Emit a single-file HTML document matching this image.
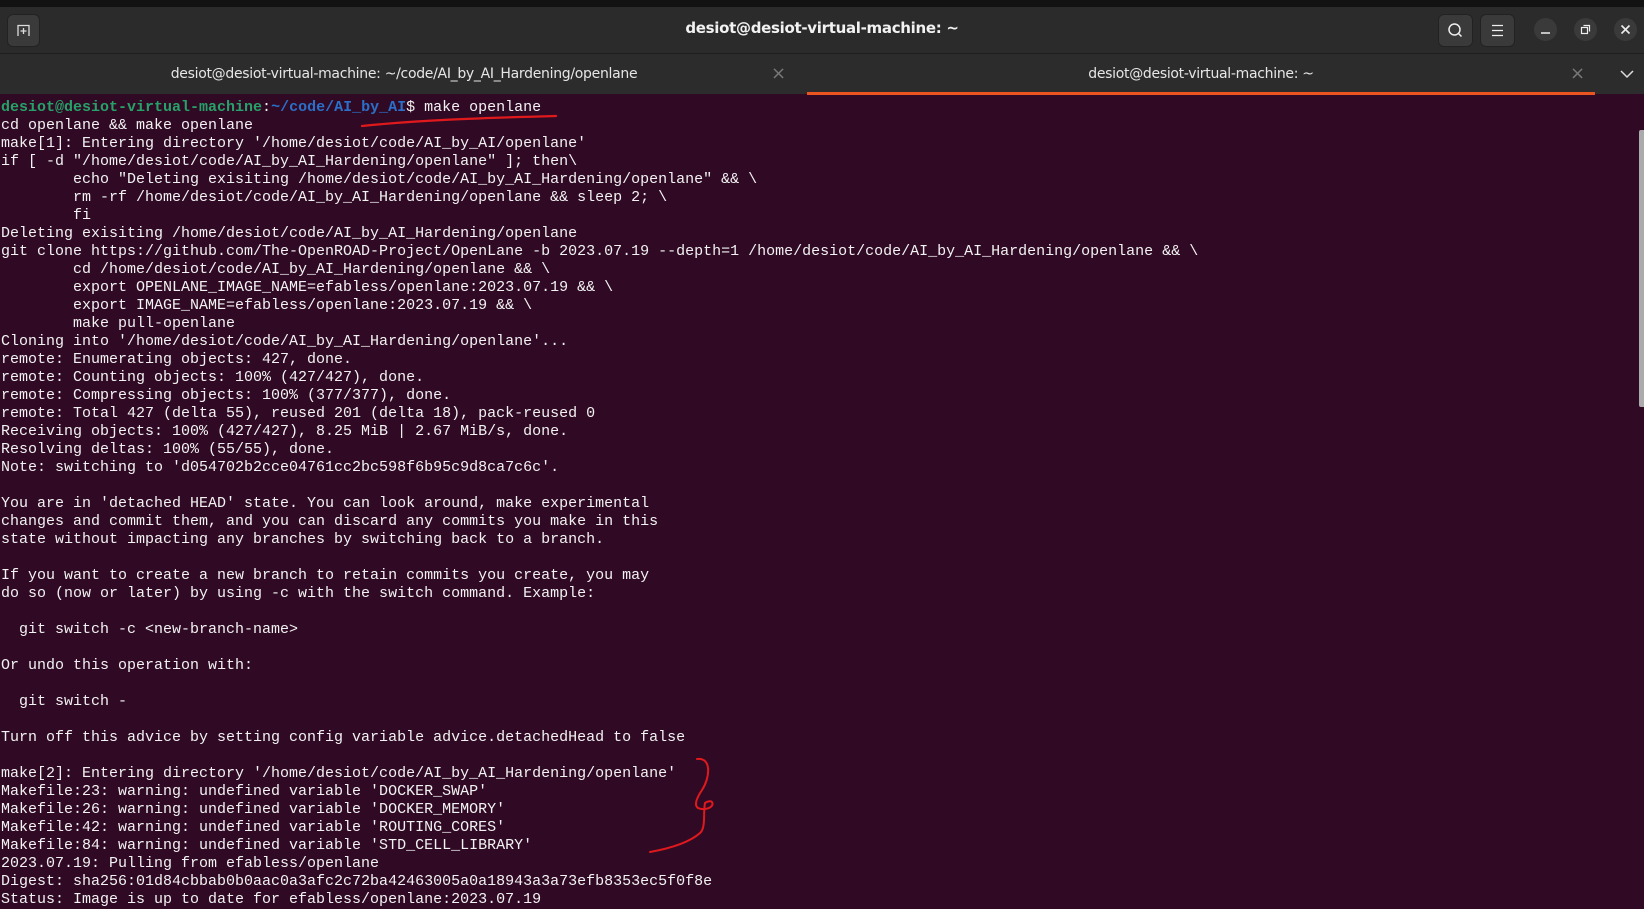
<!DOCTYPE html>
<html><head><meta charset="utf-8"><style>
html,body{margin:0;padding:0;width:1644px;height:897px;overflow:hidden;background:#300a24}
.top{position:absolute;left:0;top:0;width:1644px;height:7px;background:#121212}
.title{position:absolute;left:0;top:7px;width:1644px;height:46px;background:#2b2b2b;border-bottom:1px solid #1e1e1e}
.title .t{position:absolute;left:0;width:1644px;top:12px;text-align:center;color:#f2f2f2;font:bold 15px "DejaVu Sans","Liberation Sans",sans-serif;letter-spacing:-0.3px}
.btn{position:absolute;background:#3a3a3a;border-radius:6px;border:1px solid #222}
.circ{position:absolute;width:23px;height:23px;border-radius:50%;background:#3a3a3a}
.tabs{position:absolute;left:0;top:54px;width:1644px;height:40px;background:#2c2c2c}
.tab{position:absolute;top:12px;color:#e6e6e6;font:14px "DejaVu Sans","Liberation Sans",sans-serif;letter-spacing:-0.3px;text-align:center}
.x{position:absolute;top:9px;color:#777;font:18px "DejaVu Sans",sans-serif}
.ul{position:absolute;left:807px;top:92px;width:788px;height:3px;background:#e95420}
.term{position:absolute;left:1px;top:99px;margin:0;font:15px/18px "Liberation Mono",monospace;color:#f2f2f2;white-space:pre}
.g{font-weight:bold;color:#26a269}
.b{color:#2a6fc9;font-weight:bold}
.sb{position:absolute;left:1639px;top:130px;width:5px;height:277px;background:#ababab;border-radius:2px 0 0 2px}
</style></head><body>
<div class="top"></div>
<div class="title"><div class="t">desiot@desiot-virtual-machine: ~</div></div>
<div class="btn" style="left:7px;top:14px;width:31px;height:31px">
<svg width="31" height="31" viewBox="0 0 31 31"><path d="M10 21V10.5h11V21" fill="none" stroke="#ddd" stroke-width="1.3"/><path d="M15.5 13v6M12.5 16h6" stroke="#ddd" stroke-width="1.3"/></svg></div>
<div class="btn" style="left:1438px;top:14px;width:33px;height:31px">
<svg width="33" height="31" viewBox="0 0 33 31"><circle cx="15.5" cy="14.5" r="5.5" fill="none" stroke="#eee" stroke-width="1.5"/><path d="M19.5 18.5l3 3" stroke="#eee" stroke-width="1.5"/></svg></div>
<div class="btn" style="left:1480px;top:14px;width:33px;height:31px">
<svg width="33" height="31" viewBox="0 0 33 31"><path d="M11 10.5h11M11 15.5h11M11 20.5h11" stroke="#eee" stroke-width="1.3"/></svg></div>
<div class="circ" style="left:1534px;top:18px"><svg width="23" height="23"><path d="M7 15h9" stroke="#eee" stroke-width="1.5"/></svg></div>
<div class="circ" style="left:1574px;top:18px"><svg width="23" height="23"><rect x="7.5" y="9.5" width="6" height="6" fill="none" stroke="#eee" stroke-width="1.2"/><path d="M9.5 7.5h6v6" fill="none" stroke="#eee" stroke-width="1.2"/></svg></div>
<div class="circ" style="left:1614px;top:18px"><svg width="23" height="23"><path d="M7.5 7.5l8 8M15.5 7.5l-8 8" stroke="#eee" stroke-width="1.6"/></svg></div>
<div class="tabs">
<div class="tab" style="left:0;width:808px">desiot@desiot-virtual-machine: ~/code/AI_by_AI_Hardening/openlane</div>
<div class="x" style="left:771px">×</div>
<div class="tab" style="left:808px;width:786px">desiot@desiot-virtual-machine: ~</div>
<div class="x" style="left:1570px">×</div>
<svg style="position:absolute;left:1619px;top:14px" width="16" height="12"><path d="M2 3l6 6 6-6" fill="none" stroke="#ddd" stroke-width="1.5"/></svg>
</div>
<div class="ul"></div>
<pre class="term"><span class="g">desiot@desiot-virtual-machine</span>:<span class="b">~/code/AI_by_AI</span>$ make openlane
cd openlane &amp;&amp; make openlane
make[1]: Entering directory '/home/desiot/code/AI_by_AI/openlane'
if [ -d "/home/desiot/code/AI_by_AI_Hardening/openlane" ]; then\
        echo "Deleting exisiting /home/desiot/code/AI_by_AI_Hardening/openlane" &amp;&amp; \
        rm -rf /home/desiot/code/AI_by_AI_Hardening/openlane &amp;&amp; sleep 2; \
        fi
Deleting exisiting /home/desiot/code/AI_by_AI_Hardening/openlane
git clone https://github.com/The-OpenROAD-Project/OpenLane -b 2023.07.19 --depth=1 /home/desiot/code/AI_by_AI_Hardening/openlane &amp;&amp; \
        cd /home/desiot/code/AI_by_AI_Hardening/openlane &amp;&amp; \
        export OPENLANE_IMAGE_NAME=efabless/openlane:2023.07.19 &amp;&amp; \
        export IMAGE_NAME=efabless/openlane:2023.07.19 &amp;&amp; \
        make pull-openlane
Cloning into '/home/desiot/code/AI_by_AI_Hardening/openlane'...
remote: Enumerating objects: 427, done.
remote: Counting objects: 100% (427/427), done.
remote: Compressing objects: 100% (377/377), done.
remote: Total 427 (delta 55), reused 201 (delta 18), pack-reused 0
Receiving objects: 100% (427/427), 8.25 MiB | 2.67 MiB/s, done.
Resolving deltas: 100% (55/55), done.
Note: switching to 'd054702b2cce04761cc2bc598f6b95c9d8ca7c6c'.

You are in 'detached HEAD' state. You can look around, make experimental
changes and commit them, and you can discard any commits you make in this
state without impacting any branches by switching back to a branch.

If you want to create a new branch to retain commits you create, you may
do so (now or later) by using -c with the switch command. Example:

  git switch -c &lt;new-branch-name&gt;

Or undo this operation with:

  git switch -

Turn off this advice by setting config variable advice.detachedHead to false

make[2]: Entering directory '/home/desiot/code/AI_by_AI_Hardening/openlane'
Makefile:23: warning: undefined variable 'DOCKER_SWAP'
Makefile:26: warning: undefined variable 'DOCKER_MEMORY'
Makefile:42: warning: undefined variable 'ROUTING_CORES'
Makefile:84: warning: undefined variable 'STD_CELL_LIBRARY'
2023.07.19: Pulling from efabless/openlane
Digest: sha256:01d84cbbab0b0aac0a3afc2c72ba42463005a0a18943a3a73efb8353ec5f0f8e
Status: Image is up to date for efabless/openlane:2023.07.19</pre>
<div class="sb"></div>
<svg style="position:absolute;left:0;top:0" width="1644" height="897">
<path d="M362 126C420 120 480 118 556 116" fill="none" stroke="#e0191c" stroke-width="2.2" stroke-linecap="round"/>
<path d="M697 759C712 757 710 778 702 790C694 802 693 810 705 809C716 808 714 797 705 803C703 813 706 828 700 833C690 842 672 848 650 852" fill="none" stroke="#e0191c" stroke-width="2" stroke-linecap="round"/>
</svg>
</body></html>
